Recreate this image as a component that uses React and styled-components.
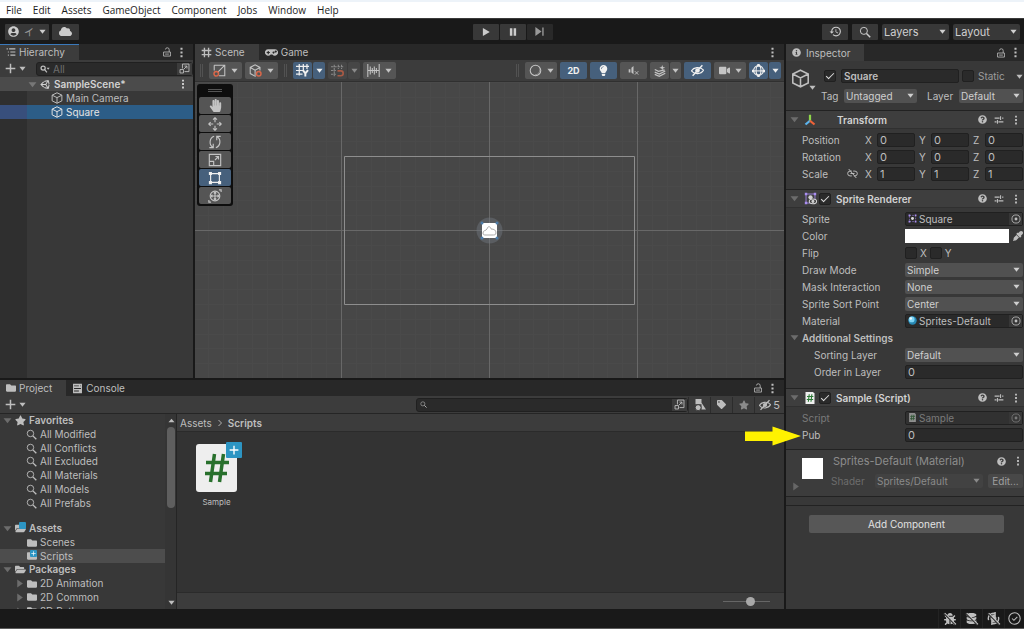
import React from "react";
import styled, { createGlobalStyle, css } from "styled-components";
import { FaUnity, FaUserCircle, FaCloud, FaHandPaper, FaLightbulb, FaStar, FaTag, FaBug, FaDatabase, FaFolder, FaFolderOpen, FaInfoCircle, FaQuestionCircle, FaEyeDropper, FaVideo } from "react-icons/fa";
import { MdHistory } from "react-icons/md";

const c = {
  black: "#191919",
  bar: "#282828",
  panel: "#383838",
  raised: "#3c3c3c",
  header: "#3e3e3e",
  field: "#2a2a2a",
  edge: "#202020",
  button: "#555555",
  blue: "#46607c",
  select: "#2c5d87",
  text: "#bebebe",
  bright: "#d2d2d2",
  dim: "#7c7c7c",
  orange: "#d9674a",
};

const GlobalStyle = createGlobalStyle`
  *, *::before, *::after { box-sizing: border-box; }
  html, body, #root { margin: 0; height: 100%; }
  body { background: ${c.black}; color: ${c.text}; font: 10px/14px Inter, "Noto Sans CJK JP", sans-serif; overflow: hidden; }
  button, input, select { font: inherit; color: inherit; margin: 0; padding: 0; border: 0; border-radius: 0; background: none; outline: 0; }
  ul, ol, h1, h2, h3 { margin: 0; padding: 0; list-style: none; font-size: inherit; font-weight: inherit; }
  a { color: inherit; text-decoration: none; }
  svg { display: block; flex: none; }
`;

/* ---------- icons ---------- */

const shapes = {
  caret: <path d="M1 4h14l-7 9z" fill="currentColor" stroke="none" />,
  right: <path d="M4 1v14l10-7z" fill="currentColor" stroke="none" />,
  up: <path d="M1 12h14L8 4z" fill="currentColor" stroke="none" />,
  dots: <path d="M6.500 1h3v3h-3zM6.500 6.500h3v3h-3zM6.500 12h3v3h-3z" fill="currentColor" stroke="none" />,
  lock: <path d="M2.500 8h11v6.500h-11zM11.500 8V4.500a3 3 0 0 0-6-.5M5 11.300h6" />,
  plus: <path d="M8 1v14M1 8h14" strokeWidth="2.200" />,
  list: <path d="M1 3h2M5 3h10M3 8h1.500M7 8h8M3 13h1.500M7 13h8" strokeWidth="1.700" />,
  grid: <path d="M5 1v14M11 1v14M1 5h14M1 11h14" strokeWidth="2" />,
  search: <><circle cx="6.500" cy="6.500" r="4.700" /><path d="m10 10 5 5" strokeWidth="2" /></>,
  searchMenu: <><circle cx="5" cy="6.500" r="3.300" strokeWidth="2" /><path d="m7.500 9 3.500 4.500" strokeWidth="2" /><path d="M10.500 6h5L13 9z" fill="currentColor" stroke="none" /></>,
  popout: <><path d="M5 1.500h9.500v11H8M5 1.500V8" /><path d="M1.500 9.500h5v5h-5zM7 9l4.500-4.500M8 4.500h3.500V8" /></>,
  cube: <path d="M8 1 14.500 4.200v7.600L8 15l-6.500-3.200V4.200zM1.500 4.200 8 7.500l6.500-3.300M8 7.500V15" />,
  gamepad: <path fillRule="evenodd" stroke="none" fill="currentColor" d="M4 4a4 4 0 1 0 3 6.500h2A4 4 0 1 0 12 4zM3.300 6h1.400v1.300H6v1.400H4.700V10H3.300V8.700H2V7.300h1.300zM10.500 6.800a1.200 1.200 0 1 0 .1 0zM13.200 5.500a1.200 1.200 0 1 0 .1 0z" />,
  shading: <><path d="M1.500 1.500h13v13h-7M1.500 1.500V8M14.500 1.500 6 10" /><circle cx="4" cy="12" r="2.800" stroke={c.orange} strokeWidth="1.800" /></>,
  cubeSnap: <><path d="M8.500 14.500 7.500 15l-6-3.200V4.200L7.500 1l6 3.200V8M1.500 4.200l6 3.300 6-3.300M7.500 7.500v6" /><circle cx="12" cy="12" r="2.800" stroke={c.orange} strokeWidth="1.800" /></>,
  gridY: <><path d="M4 0v14M9 0v8M13.500 0v6M0 3h16M0 8h9M0 12.500h8" strokeWidth="1.500" /><path d="m8.500 7.500 3 4v4M14.800 7.500l-3.300 4" strokeWidth="2.400" /></>,
  gridSnap: <><path d="M4 1v14M9 1v5M13 1v5M0 3.500h15M0 8h6M0 12.500h6" strokeDasharray="3 1" /><path d="M8 8.500h4a3 3 0 0 1 0 6H8" stroke="#a85a45" strokeWidth="2" /></>,
  ruler: <path d="M1 0v16M15 0v16M4 3v10M6.500 5v6M9 3v10M11.500 5v6M1 8h14" />,
  sphere: <><circle cx="8" cy="8" r="6.500" /><path d="M12.500 3.500a6.500 6.500 0 0 1-9 9c5 3 12-2 9-9z" fill="currentColor" stroke="none" /></>,
  mute: <><path d="M1 6h2.500v5H1zM5 4l3-2.500v12L5 11z" fill="currentColor" stroke="none" /><path d="m10 9 5 5M15 9l-5 5" /></>,
  layers: <><path d="m1 6 5 2.500 8-2M1 9.500l6 2.500 8-4M1 12.500 7 15l8-4" strokeWidth="1.600" /><path d="m11 0 1 2.500 3 1-3 1-1 2.500-1-2.500-3-1 3-1z" fill="currentColor" stroke="none" /></>,
  eyeOff: <><path d="M.5 8.500C3 4 11 2.500 15.500 7.500c-3 5.500-11 6-15 1z" strokeWidth="1.500" /><circle cx="8" cy="8" r="2.800" fill="currentColor" stroke="none" /><path d="M2 14.500 14 1.500" strokeWidth="1.800" /></>,
  gizmo: <><circle cx="8" cy="8" r="6" /><ellipse cx="8" cy="8" rx="3" ry="6" /><path d="M1 8.500h14" /><path d="M6.500 0h3v3h-3zM6.500 13h3v3h-3zM0 7h3v3H0zM13 7h3v3h-3z" fill="currentColor" stroke="none" /></>,
  move: <path d="M8 1v5M8 10v5M1 8h5M10 8h5M5.800 3 8 .8 10.200 3M5.800 13 8 15.200l2.200-2.200M3 5.800.8 8 3 10.200M13 5.800 15.200 8 13 10.200" />,
  rotate: <path d="M5.500 14A6.800 7 0 0 1 7 1.500M10.500 2A6.800 7 0 0 1 9 14.500M1.500 14.500h4.500V10M14.500 1.500H10V6" />,
  scale: <path d="M1.500 1.500h13v13h-13zM1.500 9.500h5v5M8 8l4-4M8.500 4H12v3.500" />,
  rect: <><path d="M3 3h10v10H3z" /><path d="M1 1h3.500v3.500H1zM11.500 1H15v3.500h-3.500zM1 11.500h3.500V15H1zM11.500 11.500H15V15h-3.500z" fill="currentColor" stroke="none" /></>,
  transform: <><circle cx="8" cy="8" r="5.500" /><path d="M8 3.500v9M3.500 8h9M6.500 5 8 3.500 9.500 5M6.500 11 8 12.500 9.500 11M5 6.500 3.500 8 5 9.500M11 6.500 12.500 8 11 9.500M12.500 1H15v2.500M3.500 15H1v-2.500" /></>,
  play: <path d="M3 1.500v13L14 8z" fill="currentColor" stroke="none" />,
  pause: <path d="M3 2h4v12H3zM9 2h4v12H9z" fill="currentColor" stroke="none" />,
  step: <path d="M2 1.500v13L11 8zM12 2h2v12h-2z" fill="currentColor" stroke="none" />,
  sliders: <path d="M1 5h8M13 5h2M10.500 2v6M1 11h3M7 11h8M5.500 8v6" strokeWidth="1.700" />,
  unlink: <path d="M7 4.500H4.500a3.500 3.500 0 0 0 0 7H7M9 4.500h2.500a3.500 3.500 0 0 1 0 7H10M2.500 1.500l11 13M5 8h6" strokeWidth="1.400" />,
  axes: <><path d="M8 9V1" stroke="#8fd64a" strokeWidth="3" /><path d="m8 9-6 5" stroke="#5bb5f0" strokeWidth="3" /><path d="m8 9 6 5" stroke="#ef6238" strokeWidth="3" /></>,
  sprite: <><path d="M2.500 2.500h11v11h-11z" stroke="#8f79c9" /><path d="M1 1h3v3H1zM12 1h3v3h-3zM1 12h3v3H1z" fill="#a98ef0" stroke="none" /><circle cx="8" cy="6.500" r="2.600" fill="currentColor" stroke="none" /><ellipse cx="11" cy="11.500" rx="4.500" ry="3" fill="#383838" /><circle cx="11" cy="11.500" r="1.300" fill="currentColor" /></>,
  spriteSmall: <><path d="M2.500 2.500h11v11h-11z" stroke="#8f79c9" strokeDasharray="3 2" /><path d="M1 1h3v3H1zM12 1h3v3h-3zM1 12h3v3H1zM12 12h3v3h-3z" fill="#a98ef0" stroke="none" /><circle cx="8" cy="8" r="2.600" fill="#ddd" stroke="none" /></>,
  material: <><circle cx="8" cy="8" r="7.500" fill="#2688b4" stroke="none" /><circle cx="6.500" cy="6" r="5.200" fill="#7fd4f5" stroke="none" /><circle cx="5" cy="4.500" r="2.200" fill="#e8faff" stroke="none" /></>,
  target: <><circle cx="8" cy="8" r="6.500" /><circle cx="8" cy="8" r="2.300" fill="currentColor" stroke="none" /></>,
  console: <path fillRule="evenodd" fill="currentColor" stroke="none" d="M1.500 1h13v14h-13zM3 3.500v1.300h7V3.500zM3 7.300v1.300h10V7.300zM3 11v1.300h7V11zM12 3.500v1.300h1V3.500z" />,
  types: <><path d="M2 0h8v7H2zM10 5l6 9h-6z" fill="currentColor" stroke="none" /><circle cx="5.500" cy="11.500" r="4" fill="currentColor" stroke={c.raised} /></>,
  sync: <><path d="M2 10A6.300 6.300 0 0 1 10 2M14 6a6.300 6.300 0 0 1-8 8M10 0v4H6.500M6 16v-4h3.500" strokeWidth="1.700" /><circle cx="8" cy="8" r="3" fill="currentColor" /></>,
  okay: <><circle cx="8" cy="8" r="7" /><path d="m5 8 2.300 2.300L11.500 6" /></>,
  chevron: <path d="m5 2 6 6-6 6" strokeWidth="1.800" />,
};

const Icon = ({ name, size = 12, color }) => (
  <svg width={size} height={size} viewBox="0 0 16 16" fill="none" stroke="currentColor" strokeWidth="1.300" color={color} aria-hidden="true">
    {shapes[name]}
  </svg>
);

const ScriptIcon = ({ size = 12, dim }) => (
  <svg width={size} height={size} viewBox="0 0 16 16" fill="none" opacity={dim ? 0.5 : 1} aria-hidden="true">
    <path d="M2 0h10l2 2v14H2z" fill="#eee" />
    <path d="M7 3 5.800 13M10.500 3 9.300 13M4 6h8.500M3.700 10h8.500" stroke="#2b7a35" strokeWidth="1.500" />
  </svg>
);

/* ---------- shell ---------- */

const Page = styled.div`display: flex; flex-direction: column; height: 100vh;`;

const MenuBar = styled.nav`
  display: flex; gap: 11px; height: 18px; flex: none; padding: 0 6px;
  border-top: 2px solid #edf3f9; background: #fff; color: #1c1c1c;
  font: 10px/17px "Open Sans", sans-serif;
`;

const Toolbar = styled.header`
  display: grid; grid-template-columns: 1fr auto 1fr; align-items: center; flex: none;
  height: 26px; padding: 0 4px 0 5px; border-top: 1px solid #3a3a3a;
`;
const Cluster = styled.div`
  display: flex; align-items: center; gap: ${(p) => p.$gap ?? 3}px;
  justify-content: ${(p) => (p.$end ? "flex-end" : "flex-start")};
`;
const DarkButton = styled.button`
  display: flex; align-items: center; justify-content: center; gap: 5px;
  width: ${(p) => p.$w ?? 26}px; height: 16px; background: ${(p) => (p.$off ? "#292929" : "#383838")};
  color: ${(p) => (p.$off ? "#999" : "#ccc")}; border-radius: 1px;
`;
const UserMark = styled.span`color: #999;`;

const Workspace = styled.main`
  flex: 1; min-height: 0; display: grid; grid-template-columns: minmax(0, 1fr) 238px; gap: 2px;
`;
const LeftSide = styled.div`display: grid; grid-template-rows: minmax(0, 1fr) 229px; gap: 2px; min-height: 0;`;
const TopSide = styled.div`display: grid; grid-template-columns: 193px minmax(0, 1fr); gap: 2px; min-height: 0;`;

const Panel = styled.section`
  display: flex; flex-direction: column; min-height: 0; min-width: 0; background: ${c.panel};
`;
const TabBar = styled.div`display: flex; flex: none; height: ${(p) => p.$h ?? 16}px; background: ${c.bar};`;
const Tab = styled.button`
  display: flex; align-items: center; gap: ${(p) => p.$gap ?? 3}px; padding: 0 ${(p) => p.$pad ?? 14}px 0 6px;
  ${(p) => p.$active && css`background: ${c.raised};`}
  ${(p) => p.$focus && css`box-shadow: inset 0 1px #3a79bb;`}
`;
const TabTools = styled.div`display: flex; align-items: center; gap: 4px; margin-left: auto; padding-right: ${(p) => p.$pr ?? 6}px;`;
const IconButton = styled.button`display: flex; align-items: center; justify-content: center; color: ${c.text};`;

const PanelTools = ({ lock = true, pr }) => (
  <TabTools $pr={pr}>
    {lock && <IconButton aria-label="Lock"><Icon name="lock" size={10} /></IconButton>}
    <IconButton aria-label="More"><Icon name="dots" size={11} /></IconButton>
  </TabTools>
);

const ToolRow = styled.div`
  display: flex; align-items: center; flex: none; height: 17px; padding-left: 5px;
  background: ${c.raised};
`;
const AddButton = styled.button`display: flex; align-items: center; gap: 3px; width: 31px; flex: none;`;
const SearchBox = styled.label`
  display: flex; align-items: center; height: 14px; min-width: 0; width: ${(p) => p.$w ?? "auto"}; flex: ${(p) => (p.$w ? "none" : 1)};
  background: ${c.field}; border: 1px solid ${c.edge}; border-radius: 3px; padding-left: 3px; gap: 3px;
  input { flex: 1; min-width: 0; line-height: 12px; }
  input::placeholder { color: #6e6e6e; opacity: 1; }
`;
const Popout = styled(IconButton)`width: 15px; height: 12px; background: ${c.raised};`;

/* ---------- hierarchy ---------- */

const Tree = styled.ul`
  flex: 1;
  background: linear-gradient(to right, #2f2f2f 27px, transparent 27px);
`;
const TreeRow = styled.li`
  display: flex; align-items: center; gap: 3px; height: 14px; padding: 0 5px 0 ${(p) => p.$indent}px;
  font-weight: ${(p) => (p.$bold ? 600 : 400)};
  ${(p) => p.$bold && css`background: #4b4b4b; color: ${c.bright};`}
  ${(p) => p.$selected && css`background: linear-gradient(to right, #384f7c 27px, ${c.select} 27px); color: #e4e4e4;`}
`;
const RowEnd = styled.span`margin-left: auto;`;

/* ---------- scene ---------- */

const SceneBar = styled.div`
  display: flex; align-items: center; gap: 3px; flex: none; height: 22px; padding: 0 3px 0 2px;
  background: ${c.raised}; border-bottom: 1px solid #303030;
`;
const Grip = styled.span`width: 3px; height: 13px; border: solid #525252; border-width: 0 1px; margin: 0 3px;`;
const Spring = styled.span`flex: 1;`;
const ToolButton = styled.button`
  display: flex; align-items: center; justify-content: center; gap: 5px; height: 17px; width: ${(p) => p.$w ?? 27}px;
  border-radius: 2px; background: ${(p) => (p.$on ? c.blue : p.$off ? "#464646" : c.button)};
  color: ${(p) => (p.$on ? "#f0f0f0" : p.$off ? "#8a8a8a" : "#c4c4c4")}; font-weight: 700; font-size: 9px;
`;
const Split = styled.div`display: flex; gap: 1px;`;

const Canvas = styled.div`
  position: relative; flex: 1; min-height: 0; background: #474747; overflow: hidden;
  > svg { width: 100%; height: 100%; }
`;
const ToolOverlay = styled.div`
  position: absolute; left: 2px; top: 2px; display: flex; flex-direction: column; gap: 1px; align-items: center;
  width: 36px; padding: 0 2px 2px; background: #0e0e0e; border-radius: 3px;
`;
const Handle = styled.span`width: 14px; height: 3px; border: solid #555; border-width: 1px 0; margin: 5px 0 4px;`;

const range = (n) => Array.from({ length: n * 2 + 1 }, (_, i) => i - n);

const SceneView = () => (
  <svg viewBox="-295 -148 589 296" preserveAspectRatio="xMidYMid slice" role="img" aria-label="Scene view">
    <g stroke="#4a4a4a">
      {range(20).map((i) => <path key={`v${i}`} d={`M${Math.round(i * 14.8) - 0.5} -300V300`} />)}
      {range(10).map((i) => <path key={`h${i}`} d={`M-600 ${Math.round(i * 14.8) + 0.5}H600`} />)}
    </g>
    <path d="M-148.500 -300V300M-.5 -300V300M147.500 -300V300M-600 .5H600" stroke="#686868" />
    <path d="M-145.500 -73.500H144.500V74.500H-145.500z" fill="none" stroke="#8e8e8e" />
    <circle cx="-.5" cy=".5" r="13" fill="#707880" opacity=".45" />
    <path d="M-8 -7H7V8H-8z" fill="#fff" />
    <path d="M-7 3c0-3 3-2 4-4 1-4 4-2 4 0 3 0 5 1 5 4 0 2-2 2-4 2h-6c-2 0-3 0-3-2z" fill="none" stroke="#aaa" />
    <g fill="#4d7ca8"><circle cx="-8" cy="-7" r="1.500" /><circle cx="7" cy="-7" r="1.500" /><circle cx="-8" cy="8" r="1.500" /><circle cx="7" cy="8" r="1.500" /></g>
  </svg>
);

/* ---------- project ---------- */

const FilterButton = styled(IconButton)`
  width: ${(p) => p.$w ?? 22}px; height: 16px; gap: 2px; border-left: 1px solid #2c2c2c; font-size: 11px;
`;
const ProjectBody = styled.div`
  flex: 1; min-height: 0; display: grid; grid-template-columns: 165px 12px minmax(0, 1fr); border-top: 1px solid #252525;
`;
const Side = styled.div`overflow: hidden;`;
const Group = styled.ul`display: grid; grid-template-rows: repeat(7, 1fr); height: 96px; margin-bottom: 12px;`;
const ProjectRow = styled.li`
  display: flex; align-items: center; gap: 3px; padding-left: ${(p) => p.$indent}px; line-height: 13px; white-space: nowrap;
  font-weight: ${(p) => (p.$bold ? 600 : 400)};
  ${(p) => p.$selected && css`background: #4d4d4d;`}
`;
const Badged = styled.span`position: relative; display: flex;`;
const Badge = styled.span`
  position: absolute; right: ${(p) => (p.$big ? -5 : 0)}px; top: ${(p) => (p.$big ? -2 : -1)}px;
  display: flex; align-items: center; justify-content: center;
  width: ${(p) => (p.$big ? 16 : 7)}px; height: ${(p) => (p.$big ? 16 : 7)}px; background: #2d95c3; color: #fff; border-radius: 1px;
`;
const Scroll = styled.div`
  display: flex; flex-direction: column; align-items: center; justify-content: flex-start; padding: 3px 0 3px 1px;
  background: #353535; border-right: 1px solid #252525;
`;
const Thumb = styled.span`width: 8px; height: 81px; margin-top: 3px; margin-bottom: auto; border-radius: 4px; background: #5f5f5f;`;
const Browser = styled.div`display: flex; flex-direction: column; background: #333;`;
const Crumbs = styled.nav`
  display: flex; align-items: center; gap: 4px; height: 18px; padding-left: 3px; background: ${c.raised}; border-bottom: 1px solid #2b2b2b;
  a:last-child { font-weight: 600; }
`;
const Files = styled.div`flex: 1; padding: 12px 19px;`;
const FileTile = styled.button`
  display: flex; flex-direction: column; align-items: center; gap: 4px; width: 41px; font-size: 8px; line-height: 12px;
`;
const Paper = styled.span`
  position: relative; display: flex; align-items: center; justify-content: center; width: 41px; height: 48px;
  background: #eee; border-radius: 3px;
`;
const BrowserFoot = styled.div`
  display: flex; justify-content: flex-end; align-items: center; height: 17px; padding-right: 14px;
  background: ${c.raised}; border-top: 1px solid #2b2b2b;
`;
const Slider = styled.input`
  appearance: none; width: 47px; height: 9px;
  &::-webkit-slider-runnable-track { height: 1px; background: #666; }
  &::-webkit-slider-thumb { appearance: none; width: 9px; height: 9px; margin-top: -4px; border-radius: 50%; background: #a8a8a8; }
`;

/* ---------- inspector ---------- */

const ObjectHead = styled.div`
  display: grid; grid-template-columns: 29px 1fr; flex: none; height: 49px; padding: 8px 1px 0 5px;
`;
const HeadLines = styled.div`display: flex; flex-direction: column; gap: 6px;`;
const HeadLine = styled.div`display: flex; align-items: center; height: 14px; padding-left: ${(p) => p.$pl ?? 0}px;`;
const HeadIcon = styled.div`
  position: relative;
  svg + svg { position: absolute; left: 18px; top: 15px; }
`;
const Check = styled.input`
  appearance: none; display: grid; place-content: center; width: 12px; height: 12px; flex: none;
  background: ${c.field}; border: 1px solid ${c.edge}; border-radius: 2px;
  &:checked::after { content: ""; width: 8px; height: 4px; border: solid #ddd; border-width: 0 0 1px 1px; rotate: -45deg; translate: 0 -1px; }
`;
const Field = styled.input`
  width: 100%; min-width: 0; height: 14px; padding: 0 2px; background: ${c.field};
  border: 1px solid ${c.edge}; border-radius: 2px; font-size: ${(p) => (p.$name ? 10 : 11)}px; font-weight: ${(p) => (p.$name ? 600 : 400)};
`;
const NameField = styled(Field)`width: 118px; margin: 0 3px 0 5px;`;
const SelectShell = styled.span`
  position: relative; display: block; width: ${(p) => p.$w ?? "100%"}; height: ${(p) => p.$h ?? 14}px;
  background: ${(p) => (p.$dark ? "#383838" : p.$dim ? "#424242" : "#515151")}; border-radius: 2px;
  color: ${(p) => (p.$dim ? "#8a8a8a" : "#cfcfcf")};
  select { appearance: none; display: block; width: 100%; height: 100%; padding: 0 2px; font-size: ${(p) => p.$fs ?? 10}px; line-height: 14px; }
  svg { position: absolute; right: 3px; top: calc(50% - 4px); pointer-events: none; }
`;
const Drop = ({ value, label, id, w, h, dim, dark, fs }) => (
  <SelectShell $w={w} $h={h} $dim={dim} $dark={dark} $fs={fs}>
    <select id={id} aria-label={label} defaultValue={value}><option>{value}</option></select>
    <Icon name="caret" size={7} />
  </SelectShell>
);

const Block = styled.section`
  flex: none; border-top: 1px solid #222; padding-bottom: ${(p) => p.$pb ?? 0}px;
`;
const BlockHead = styled.h2`
  display: flex; align-items: center; height: 18px; padding: 0 3px 0 4px; margin-bottom: 2px;
  background: ${c.header}; border-bottom: 1px solid #303030; color: ${c.bright}; font-weight: 600;
`;
const Fold = styled.span`width: 14px; color: #6c6c6c;`;
const Title = styled.span`flex: 1; padding-left: ${(p) => p.$pl ?? 5}px;`;
const HeadTools = styled.span`display: flex; align-items: center; gap: 7px; color: ${c.text};`;
const Prop = styled.div`
  position: relative; display: grid; grid-template-columns: ${(p) => 119 - (p.$indent ?? 16)}px minmax(0, 1fr); align-items: center;
  height: 17px; padding: 0 1px 0 ${(p) => p.$indent ?? 16}px; color: ${(p) => (p.$dim ? "#7a7a7a" : c.text)};
`;
const Vector = styled(Prop)`
  grid-template-columns: 45px 18px minmax(0, 54fr) minmax(0, 54fr) minmax(0, 51fr); padding-right: 0;
`;
const Axis = styled.label`
  display: grid; grid-template-columns: 12px minmax(0, 1fr); align-items: center; padding-right: 4px;
  &:last-child { padding-right: 1px; }
`;
const ObjectField = styled.span`
  display: flex; align-items: center; height: 14px; gap: 2px; padding-left: 2px; background: ${(p) => (p.$dim ? "#313131" : c.field)};
  border: 1px solid ${c.edge}; border-radius: 2px;
`;
const Pick = styled(IconButton)`width: 13px; height: 12px; margin-left: auto; background: #373737; color: inherit;`;
const Swatch = styled.span`display: flex; align-items: center; gap: 4px;
  input { flex: 1; min-width: 0; height: 14px; }
  input::-webkit-color-swatch-wrapper { padding: 0; }
  input::-webkit-color-swatch { border: 0; }
`;
const Flip = styled.span`display: flex; gap: 3px; label { display: flex; align-items: center; gap: 3px; }`;
const SubHead = styled.h3`display: flex; align-items: center; height: 17px; padding-left: 4px; font-weight: 600;`;
const SubFold = styled(Fold)`width: 12px;`;
const Arrow = styled.svg`position: absolute; left: -41px; top: 0; z-index: 2;`;
const MaterialBlock = styled(Block)`
  display: grid; grid-template-columns: 11px 21px 1fr; height: 47px; padding: 4px 1px 0 5px; background: ${c.raised};
`;
const Preview = styled.span`width: 21px; height: 21px; margin-top: 4px; background: #fff;`;
const MaterialText = styled.div`display: flex; flex-direction: column; gap: 6px; padding-left: 8px;`;
const MaterialLine = styled.div`display: flex; align-items: center; height: 14px; gap: 5px; color: #8c8c8c; font-size: ${(p) => p.$fs ?? 10}px;`;
const MaterialFold = styled.span`align-self: end; color: #666; padding-bottom: 5px;`;
const EditButton = styled.button`width: 35px; height: 14px; background: #484848; border-radius: 2px; color: #a0a0a0;`;
const AddArea = styled.div`flex: 1; border-top: 1px solid #222; margin-top: 8px; padding: 9px 20px 0 23px;`;
const AddComponent = styled.button`width: 100%; height: 18px; background: #575757; border-radius: 2px; color: #e2e2e2;`;
const StaticLabel = styled.label`flex: 1; padding-left: 4px; color: #9c9c9c;`;
const TagLabel = styled.label`width: 23px;`;
const LayerLabel = styled.label`flex: 1; padding-left: 10px;`;
const ShaderLabel = styled.label`flex: 1; color: #6c6c6c;`;
const Divider = styled.hr`width: 100%; margin: 0; border: 0; height: 1px; flex: none; background: #222;`;
const IconSlot = styled.span`display: flex; width: 15px;`;

/* ---------- status bar ---------- */

const Status = styled.footer`
  display: flex; justify-content: flex-end; flex: none; height: 20px; border-bottom: 1px solid #5c5c5c;
`;
const StatusButton = styled(IconButton)`position: relative; width: 22px; border-left: 1px solid #232323; &:last-child { width: 20px; }`;
const Slash = styled.span`position: absolute; width: 16px; height: 2px; background: #ccc; border-bottom: 1px solid ${c.black}; rotate: 45deg;`;

const ComponentBlock = ({ title, icon, check, pb, children }) => (
  <Block $pb={pb}>
    <BlockHead>
      <Fold><Icon name="caret" size={9} /></Fold>
      {icon}
      {check && <Check type="checkbox" defaultChecked aria-label={`Enable ${title}`} />}
      <Title $pl={check ? 5 : 18}>{title}</Title>
      <HeadTools><FaQuestionCircle size={9} /><Icon name="sliders" size={10} /><Icon name="dots" size={10} /></HeadTools>
    </BlockHead>
    {children}
  </Block>
);

const vectors = [["Position", "0", "0", "0"], ["Rotation", "0", "0", "0"], ["Scale", "1", "1", "1"]];
const modes = [["Draw Mode", "Simple"], ["Mask Interaction", "None"], ["Sprite Sort Point", "Center"]];
const favorites = ["All Modified", "All Conflicts", "All Excluded", "All Materials", "All Models", "All Prefabs"];
const tools = ["move", "rotate", "scale", "rect", "transform"];

const Hierarchy = () => (
  <Panel>
    <TabBar><Tab $active $focus><Icon name="list" size={10} />Hierarchy</Tab><PanelTools /></TabBar>
    <ToolRow>
      <AddButton aria-label="Create"><Icon name="plus" size={11} /><Icon name="caret" size={7} /></AddButton>
      <SearchBox><Icon name="searchMenu" size={10} /><input placeholder="All" aria-label="Search hierarchy" /><Popout as="span"><Icon name="popout" size={11} /></Popout></SearchBox>
    </ToolRow>
    <Tree>
      <TreeRow $bold $indent={28}><Icon name="caret" size={9} color="#777" /><FaUnity size={11} />SampleScene*<RowEnd><Icon name="dots" size={10} /></RowEnd></TreeRow>
      <TreeRow $indent={51}><Icon name="cube" />Main Camera</TreeRow>
      <TreeRow $indent={51} $selected><Icon name="cube" />Square</TreeRow>
    </Tree>
  </Panel>
);

const Caret = () => <Icon name="caret" size={7} />;

const Scene = () => (
  <Panel>
    <TabBar>
      <Tab $active><Icon name="grid" size={11} />Scene</Tab>
      <Tab><Icon name="gamepad" size={13} />Game</Tab>
      <PanelTools lock={false} />
    </TabBar>
    <SceneBar>
      <Grip />
      <ToolButton $w={33} aria-label="Draw mode"><Icon name="shading" size={13} /><Caret /></ToolButton>
      <ToolButton $w={33} aria-label="Pivot"><Icon name="cubeSnap" size={13} /><Caret /></ToolButton>
      <Grip />
      <Split><ToolButton $on $w={19} aria-label="Grid"><Icon name="gridY" size={13} /></ToolButton><ToolButton $on $w={12} aria-label="Grid options"><Caret /></ToolButton></Split>
      <Split><ToolButton $off $w={19} aria-label="Snap"><Icon name="gridSnap" size={13} /></ToolButton><ToolButton $off $w={12} aria-label="Snap options"><Caret /></ToolButton></Split>
      <ToolButton $w={33} aria-label="Increment snap"><Icon name="ruler" size={13} /><Caret /></ToolButton>
      <Spring />
      <Grip />
      <ToolButton $w={32} aria-label="Shading"><Icon name="sphere" size={13} /><Caret /></ToolButton>
      <ToolButton $on>2D</ToolButton>
      <ToolButton $on aria-label="Lighting"><FaLightbulb size={11} /></ToolButton>
      <ToolButton aria-label="Audio"><Icon name="mute" size={11} /></ToolButton>
      <Split><ToolButton $w={19} aria-label="Effects"><Icon name="layers" size={12} /></ToolButton><ToolButton $w={11} aria-label="Effects options"><Caret /></ToolButton></Split>
      <ToolButton $on aria-label="Visibility"><Icon name="eyeOff" size={13} /></ToolButton>
      <ToolButton $w={32} aria-label="Camera"><FaVideo size={11} /><Caret /></ToolButton>
      <Split><ToolButton $on $w={19} aria-label="Gizmos"><Icon name="gizmo" size={13} /></ToolButton><ToolButton $on $w={12} aria-label="Gizmo options"><Caret /></ToolButton></Split>
    </SceneBar>
    <Canvas>
      <SceneView />
      <ToolOverlay>
        <Handle />
        <ToolButton $w={32} aria-label="Hand"><FaHandPaper size={13} /></ToolButton>
        {tools.map((t) => <ToolButton key={t} $w={32} $on={t === "rect"} aria-label={t}><Icon name={t} size={14} /></ToolButton>)}
      </ToolOverlay>
    </Canvas>
  </Panel>
);

const FoldMark = () => <Icon name="caret" size={9} color="#6c6c6c" />;

const Project = () => (
  <Panel>
    <TabBar>
      <Tab $active><FaFolder size={10} />Project</Tab>
      <Tab $pad={6}><Icon name="console" size={11} />Console</Tab>
      <PanelTools pr={6} />
    </TabBar>
    <ToolRow>
      <AddButton aria-label="Create asset"><Icon name="plus" size={11} /><Icon name="caret" size={7} /></AddButton>
      <Spring />
      <SearchBox $w="272px"><Icon name="search" size={7} /><input aria-label="Search assets" /><Popout as="span"><Icon name="popout" size={11} /></Popout></SearchBox>
      <FilterButton aria-label="Search by type"><Icon name="types" size={12} /></FilterButton>
      <FilterButton aria-label="Search by label"><FaTag size={9} /></FilterButton>
      <FilterButton aria-label="Save search"><FaStar size={10} color="#8a8a8a" /></FilterButton>
      <FilterButton $w={30}><Icon name="eyeOff" size={12} />5</FilterButton>
    </ToolRow>
    <ProjectBody>
      <Side>
        <Group>
          <ProjectRow $bold $indent={3}><FoldMark /><FaStar size={11} />Favorites</ProjectRow>
          {favorites.map((f) => <ProjectRow key={f} $indent={26}><Icon name="search" size={11} />{f}</ProjectRow>)}
        </Group>
        <Group>
          <ProjectRow $bold $indent={3}><FoldMark /><Badged><FaFolderOpen size={11} /><Badge /></Badged>Assets</ProjectRow>
          <ProjectRow $indent={27}><FaFolder size={10} />Scenes</ProjectRow>
          <ProjectRow $indent={27} $selected><Badged><FaFolder size={10} /><Badge><Icon name="plus" size={5} /></Badge></Badged>Scripts</ProjectRow>
          <ProjectRow $bold $indent={3}><FoldMark /><FaFolderOpen size={11} />Packages</ProjectRow>
          {["2D Animation", "2D Common", "2D Path"].map((p) => (
            <ProjectRow key={p} $indent={15}><Icon name="right" size={9} color="#6c6c6c" /><FaFolder size={10} />{p}</ProjectRow>
          ))}
        </Group>
      </Side>
      <Scroll><Icon name="up" size={7} /><Thumb /><Icon name="caret" size={7} /></Scroll>
      <Browser>
        <Crumbs><a href="#assets">Assets</a><Icon name="chevron" size={8} /><a href="#scripts">Scripts</a></Crumbs>
        <Files>
          <FileTile>
            <Paper>
              <svg width="26" height="30" viewBox="0 0 26 30" fill="none" stroke="#28702c" strokeWidth="3.500" aria-hidden="true">
                <path d="M10.500 1 6.500 29M19.500 1l-4 28M2 9.500h23M1 20.500h22" />
              </svg>
              <Badge $big><Icon name="plus" size={10} /></Badge>
            </Paper>
            Sample
          </FileTile>
        </Files>
        <BrowserFoot><Slider type="range" defaultValue="60" aria-label="Icon size" /></BrowserFoot>
      </Browser>
    </ProjectBody>
  </Panel>
);

const Inspector = () => (
  <Panel>
    <TabBar $h={17}><Tab $active $gap={5}><FaInfoCircle size={9} />Inspector</Tab><PanelTools pr={3} /></TabBar>
    <ObjectHead>
      <HeadIcon><Icon name="cube" size={19} /><Icon name="caret" size={7} /></HeadIcon>
      <HeadLines>
        <HeadLine $pl={4}>
          <Check type="checkbox" defaultChecked aria-label="Active" />
          <NameField $name defaultValue="Square" aria-label="Name" />
          <Check type="checkbox" id="static" /><StaticLabel htmlFor="static">Static</StaticLabel><IconButton aria-label="Static options"><Icon name="caret" size={7} /></IconButton>
        </HeadLine>
        <HeadLine $pl={1}>
          <TagLabel htmlFor="tag">Tag</TagLabel><Drop id="tag" value="Untagged" w="73px" />
          <LayerLabel htmlFor="layer">Layer</LayerLabel><Drop id="layer" value="Default" w="64px" />
        </HeadLine>
      </HeadLines>
    </ObjectHead>

    <ComponentBlock title="Transform" icon={<IconSlot><Icon name="axes" size={12} /></IconSlot>} pb={7}>
      {vectors.map(([name, ...v]) => (
        <Vector key={name}>
          <span>{name}</span>
          <span>{name === "Scale" && <Icon name="unlink" size={11} />}</span>
          {["X", "Y", "Z"].map((a, i) => <Axis key={a}>{a}<Field defaultValue={v[i]} aria-label={`${name} ${a}`} /></Axis>)}
        </Vector>
      ))}
    </ComponentBlock>

    <ComponentBlock title="Sprite Renderer" check icon={<IconSlot><Icon name="sprite" size={13} /></IconSlot>} pb={8}>
      <Prop><span>Sprite</span><ObjectField><Icon name="spriteSmall" size={9} />Square<Pick aria-label="Pick sprite"><Icon name="target" size={10} /></Pick></ObjectField></Prop>
      <Prop><label htmlFor="color">Color</label><Swatch><input id="color" type="color" defaultValue="#ffffff" /><FaEyeDropper size={10} /></Swatch></Prop>
      <Prop><span>Flip</span><Flip><label><Check type="checkbox" />X</label><label><Check type="checkbox" />Y</label></Flip></Prop>
      {modes.map(([l, v]) => <Prop key={l}><label htmlFor={l}>{l}</label><Drop id={l} value={v} /></Prop>)}
      <Prop><span>Material</span><ObjectField><Icon name="material" size={9} />Sprites-Default<Pick aria-label="Pick material"><Icon name="target" size={10} /></Pick></ObjectField></Prop>
      <SubHead><SubFold><Icon name="caret" size={9} /></SubFold>Additional Settings</SubHead>
      <Prop $indent={28}><label htmlFor="sorting">Sorting Layer</label><Drop id="sorting" value="Default" /></Prop>
      <Prop $indent={28}><label htmlFor="order">Order in Layer</label><Field id="order" defaultValue="0" /></Prop>
    </ComponentBlock>

    <ComponentBlock title="Sample (Script)" check icon={<IconSlot><ScriptIcon size={12} /></IconSlot>} pb={6}>
      <Prop $dim><span>Script</span><ObjectField $dim><ScriptIcon size={9} dim />Sample<Pick aria-label="Pick script"><Icon name="target" size={10} /></Pick></ObjectField></Prop>
      <Prop>
        <label htmlFor="pub">Pub</label><Field id="pub" defaultValue="0" />
        <Arrow width="57" height="20" viewBox="0 0 57 20" aria-hidden="true"><path d="M0 5.500h27.500V.5L56 10 27.500 19.500v-4.500H0z" fill="#fff200" /></Arrow>
      </Prop>
    </ComponentBlock>

    <MaterialBlock>
      <MaterialFold><Icon name="right" size={9} /></MaterialFold>
      <Preview />
      <MaterialText>
        <MaterialLine $fs={11}><Title $pl={2}>Sprites-Default (Material)</Title><HeadTools><FaQuestionCircle size={9} /><Icon name="dots" size={10} /></HeadTools></MaterialLine>
        <MaterialLine><ShaderLabel htmlFor="shader">Shader</ShaderLabel><Drop id="shader" value="Sprites/Default" w="108px" dim /><EditButton>Edit...</EditButton></MaterialLine>
      </MaterialText>
    </MaterialBlock>
    <Divider />
    <AddArea><AddComponent>Add Component</AddComponent></AddArea>
  </Panel>
);

export default function App() {
  return (
    <Page>
      <GlobalStyle />
      <MenuBar>
        {["File", "Edit", "Assets", "GameObject", "Component", "Jobs", "Window", "Help"].map((m) => <a key={m} href={`#${m}`}>{m}</a>)}
      </MenuBar>
      <Toolbar>
        <Cluster>
          <DarkButton $w={44}><FaUserCircle size={11} /><UserMark>イ</UserMark><Icon name="caret" size={7} /></DarkButton>
          <DarkButton $w={27} aria-label="Cloud"><FaCloud size={13} /></DarkButton>
        </Cluster>
        <Cluster $gap={1}>
          <DarkButton aria-label="Play"><Icon name="play" size={10} /></DarkButton>
          <DarkButton aria-label="Pause"><Icon name="pause" size={10} /></DarkButton>
          <DarkButton $off aria-label="Step"><Icon name="step" size={11} /></DarkButton>
        </Cluster>
        <Cluster $end $gap={4}>
          <DarkButton aria-label="Undo history"><MdHistory size={13} /></DarkButton>
          <DarkButton aria-label="Search"><Icon name="search" size={12} /></DarkButton>
          <Drop label="Layers" value="Layers" w="67px" h={16} dark fs={11} />
          <Drop label="Layout" value="Layout" w="67px" h={16} dark fs={11} />
        </Cluster>
      </Toolbar>
      <Workspace>
        <LeftSide>
          <TopSide><Hierarchy /><Scene /></TopSide>
          <Project />
        </LeftSide>
        <Inspector />
      </Workspace>
      <Status>
        <StatusButton aria-label="Debugger"><FaBug size={12} /><Slash /></StatusButton>
        <StatusButton aria-label="Cache"><FaDatabase size={11} /><Slash /></StatusButton>
        <StatusButton aria-label="Auto refresh"><Icon name="sync" size={13} /><Slash /></StatusButton>
        <StatusButton aria-label="Activity"><Icon name="okay" size={13} /></StatusButton>
      </Status>
    </Page>
  );
}
